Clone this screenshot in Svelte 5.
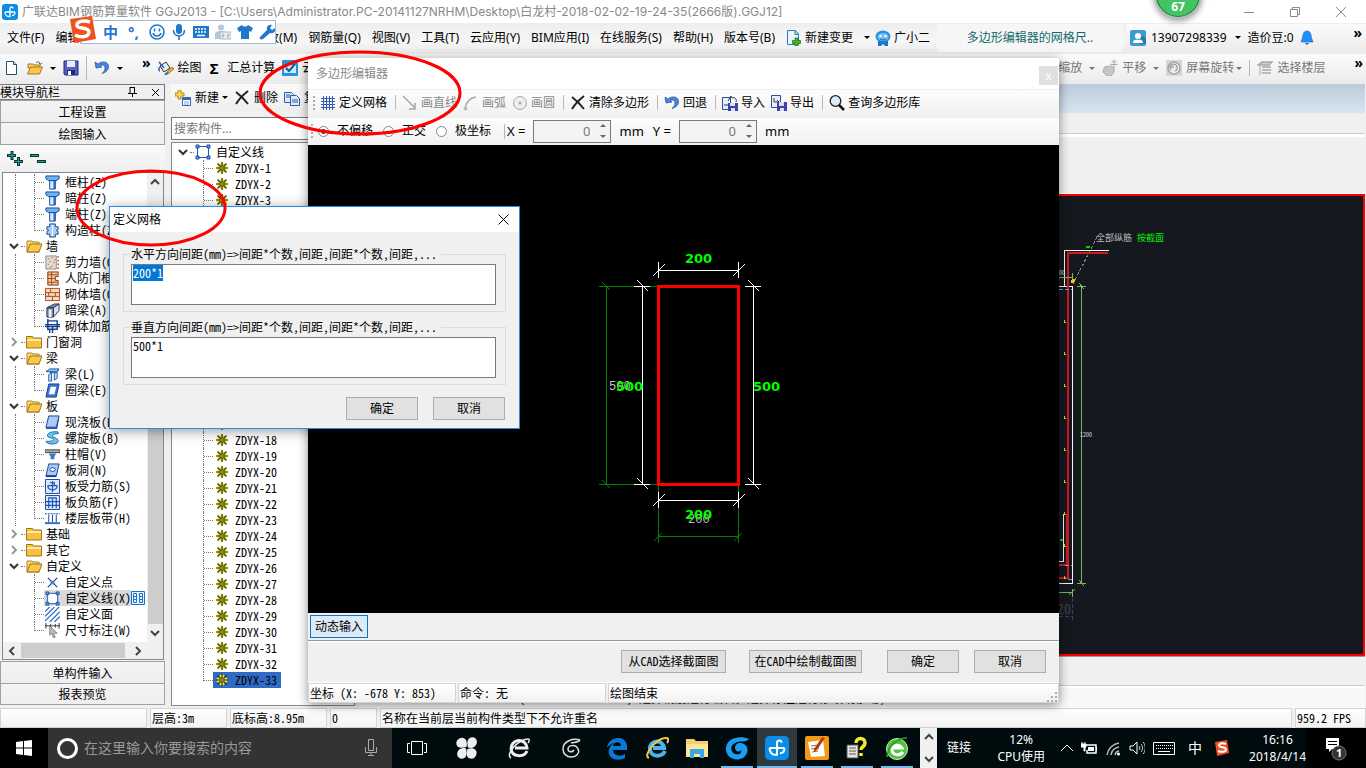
<script>
import { onMount } from 'svelte';

let gridInput;

const menus = ['文件(F)', '编辑(E)', '楼层(L)', '构件(N)', '绘图(D)', '修改(M)', '钢筋量(Q)', '视图(V)', '工具(T)', '云应用(Y)', 'BIM应用(I)', '在线服务(S)', '帮助(H)', '版本号(B)'];

const modules = [
    { label: '框柱(Z)', icon: 'column' },
    { label: '暗柱(Z)', icon: 'column' },
    { label: '端柱(Z)', icon: 'column' },
    { label: '构造柱(Z)', icon: 'cross', last: true },
    { label: '墙', folder: 'open' },
    { label: '剪力墙(Q)', icon: 'shear' },
    { label: '人防门框墙(RF)', icon: 'frame' },
    { label: '砌体墙(Q)', icon: 'brick' },
    { label: '暗梁(A)', icon: 'beamdark' },
    { label: '砌体加筋(Y)', icon: 'rebar', last: true },
    { label: '门窗洞', folder: 'closed' },
    { label: '梁', folder: 'open' },
    { label: '梁(L)', icon: 'beam' },
    { label: '圈梁(E)', icon: 'ring', last: true },
    { label: '板', folder: 'open' },
    { label: '现浇板(B)', icon: 'slab' },
    { label: '螺旋板(B)', icon: 'spiral' },
    { label: '柱帽(V)', icon: 'cap' },
    { label: '板洞(N)', icon: 'hole' },
    { label: '板受力筋(S)', icon: 'force' },
    { label: '板负筋(F)', icon: 'neg' },
    { label: '楼层板带(H)', icon: 'strip', last: true },
    { label: '基础', folder: 'closed' },
    { label: '其它', folder: 'closed' },
    { label: '自定义', folder: 'open' },
    { label: '自定义点', icon: 'point', tail: true },
    { label: '自定义线(X)', icon: 'line', tail: true, selected: true },
    { label: '自定义面', icon: 'hatch', tail: true },
    { label: '尺寸标注(W)', icon: 'dim', tail: true, last: true }
];

const parts = Array.from({ length: 33 }, (_, i) => `ZDYX-${i + 1}`);
const barTicks = Array.from({ length: 9 }, (_, i) => 125 + i * 32);

const pinned = [
    { icon: 'pinwheel' },
    { icon: 'ewhite' },
    { icon: 'gline' },
    { icon: 'edge' },
    { icon: 'ie' },
    { icon: 'explorer' },
    { icon: 'gblue', open: true },
    { icon: 'app', open: true, active: true },
    { icon: 'notes', open: true },
    { icon: 'help', open: true },
    { icon: 'egreen', open: true }
];

const icons = {
    app: '<rect width="16" height="16" rx="3" fill="#0a8ce8"/><path d="M8 8V4.500c0-2 3-2 3 0M3 8h10M3 8c0 3 2 4.500 3.500 4.500H8V8M13 8c0 2-1 3.500-3 3.500" fill="none" stroke="#fff" stroke-width="1.300"/>',
    doc: '<path d="M2.500 1.500h7l3 3v10h-10z" fill="#fff" stroke="#27486f"/><path d="M9.500 1.500v3h3" fill="#cde" stroke="#27486f"/>',
    open: '<path d="M1 4h5l1 1h6v3H1z" fill="#f7d269" stroke="#a37a1b"/><path d="M0.500 14l3-7h12l-3 7z" fill="#ffc64a" stroke="#a37a1b"/><path d="M9 3c2-2 4-1 4 1M12 3l1.500 1.500L15 3" fill="none" stroke="#48627e"/>',
    save: '<path d="M1 1h14v14H2l-1-1z" fill="#5560c8" stroke="#23277e"/><path d="M4 1h8v6H4z" fill="#e8ecff"/><path d="M4 10h8v5H4z" fill="#23277e"/><path d="M5 11h3v4H5z" fill="#fff"/>',
    undo: '<path d="M1 2l1 6 6-1-2-1.500c3-1.500 5 0 5 2.500 0 2-1 4-3 5.500 4-1 7-4 6.500-7.500C14 1.500 8 .5 4 4z" fill="#4a84dc" stroke="#1d4ea4" stroke-width=".7"/>',
    paint: '<path d="M2 6l6-4 4 6-6 4z" fill="#e6f0fa" stroke="#333"/><path d="M1 2l5 6M2 7c-2 2-1 4 0 4" stroke="#2761b5" fill="none" stroke-width="1.500"/><path d="M9 12l5-5 2 2-5 4-4 2z" fill="#f0b428" stroke="#6b4a10" stroke-width=".6"/><path d="M6 15l3-3 2 2z" fill="#2761b5"/>',
    cloud: '<rect width="16" height="16" rx="1" fill="#2196dc"/><path d="M2 5h12v8H2z" fill="#cdeaff"/><path d="M4 8l3 3 6-7" fill="none" stroke="#125a9e" stroke-width="2"/>',
    docadd: '<path d="M1.500.500h8l3 3v11h-11z" fill="#e8f4ff" stroke="#2a7fb8"/><path d="M9 .500v4h4" fill="#9fd0f4" stroke="#2a7fb8"/><path d="M9 8h3v2.500h2.500v3H12V16H9v-2.500H6.500v-3H9z" fill="#46b526" stroke="#1e6d0c" stroke-width=".7"/>',
    robot: '<ellipse cx="8" cy="6.500" rx="7.500" ry="6" fill="#2a92dc"/><path d="M3 11h10l0 5h-3l-2-2-2 2H3z" fill="#1b78c8"/><ellipse cx="8" cy="7" rx="5.500" ry="4" fill="#6cc0f0"/><circle cx="5.500" cy="6" r="1.200" fill="#fff"/><circle cx="10.500" cy="6" r="1.200" fill="#fff"/><path d="M5 8.500c2 2 4 2 6 0" stroke="#0c4c8c" fill="none"/>',
    user: '<rect width="16" height="16" rx="2" fill="#3c9bd0"/><path d="M9 14h7V9l-4-4z" fill="#2a78a8"/><circle cx="8" cy="6" r="3" fill="#fff"/><path d="M3 13c0-3 2-4 5-3 3-1 5 0 5 3z" fill="#fff"/>',
    bell: '<path d="M8 1c-4 0-4 4-4.500 7L2 12h12l-1.500-4C12 5 12 1 8 1z" fill="#1e90ff" stroke="#1561b0" stroke-width=".6"/><path d="M6 13h4l-2 2z" fill="#1561b0"/>',
    hand: '<path d="M2 8c1-2 3-2 4-1 1-2 4-1 6 1v4l-3 4H5L1 12z" fill="#c6c6c6" stroke="#aaa"/><path d="M12 0v8M9.500 2.500L12 .500l2.500 2M8.500 4.500h7" stroke="#aaa" fill="none"/>',
    rotate: '<rect width="16" height="16" fill="#d6d6d6"/><circle cx="8" cy="8" r="6" fill="#eee" stroke="#a5a5a5" stroke-width="1.500"/><path d="M5 10a3.500 3.500 0 1 1 4 1M4 3v4h4" fill="none" stroke="#a5a5a5" stroke-width="1.500"/>',
    floors: '<path d="M1 5l4-3h10l-3 3zM5 7h9M5 10h9M5 13h9" fill="#ccc" stroke="#a8a8a8" stroke-width="1.500"/><path d="M3 5v10" stroke="#a8a8a8"/>',
    newpart: '<path d="M7.500 7.500h8v8h-8z" fill="#fff" stroke="#3568b8"/><path d="M7.500 8h8v2h-8z" fill="#3568b8"/><path d="M9 12h5M9 14h5" stroke="#8ab"/><path d="M4 0h2v3h3v3H6v3H3V6H0V3h3V0z" fill="#ffd84a" stroke="#9b7410" stroke-width=".8"/>',
    del: '<path d="M2 2c4 3 8 7 12 12M14 1C9 5 5 9 2 14" stroke="#222" stroke-width="2" fill="none"/>',
    copy: '<path d="M.5 2.500h7l2 2v8h-9z" fill="#dfeafc" stroke="#2b5db0"/><path d="M6.500 5.500h6l3 3v7h-9z" fill="#dfeafc" stroke="#2b5db0"/><path d="M8 10h6M8 12h6M2 5h4M2 7h4" stroke="#2b5db0"/>',
    grid: '<path d="M3.500 1v14M6.500 1v14M9.500 1v14M12.500 1v14M1 3.500h14M1 6.500h14M1 9.500h14M1 12.500h14" stroke="#2c5cb4"/>',
    drawline: '<path d="M1 1l12 12M13 8v6H7" fill="none" stroke="#a8a8a8" stroke-width="1.500"/>',
    arc: '<path d="M2 14C3 7 6 3 13 2" fill="none" stroke="#a8a8a8" stroke-width="1.500"/><circle cx="2.500" cy="13.500" r="2" fill="#bbb"/>',
    circle: '<circle cx="8" cy="8" r="6.500" fill="#eee" stroke="#a8a8a8"/><circle cx="8" cy="8" r="1.500" fill="#a8a8a8"/>',
    imp: '<path d="M.5 2.500h8v12h-8z" fill="#e8effa" stroke="#2b4f90"/><path d="M2 10h4M6 6l3-5 1 2c3-1 5 1 4 4" stroke="#335" fill="none"/><path d="M6 8h10v8H6z" fill="#3c44a8"/><path d="M8 8h5v3H8zM9 13h4v3H9z" fill="#dde"/>',
    exp: '<path d="M.5.500h9v12h-9z" fill="#e8effa" stroke="#2b4f90"/><path d="M3 3v4h5M6 5l2 2-2 2" stroke="#335" fill="none"/><path d="M6 7h10v9H6z" fill="#3c44a8"/><path d="M8 7h5v4H8zM9 13h4v3H9z" fill="#dde"/>',
    find: '<circle cx="6.500" cy="6" r="5.300" fill="#dcecfa" stroke="#222" stroke-width="1.300"/><path d="M10 10l5 5" stroke="#111" stroke-width="2.500"/>',
    folderopen: '<path d="M1 3h5l1 1h6v10H1z" fill="#f8d878" stroke="#b08820"/><path d="M1 14l3-8h12l-3 8z" fill="#fcc84c" stroke="#9c7410"/>',
    folderclosed: '<path d="M.5 3.500v-1h6l1 1.500h8v10H.5z" fill="#f6c143" stroke="#a17a14"/><path d="M1 5h14v2H1z" fill="#fdeaa8"/>',
    column: '<path d="M1 1h14v3l-3 2H4L1 4z" fill="#6fb4ee" stroke="#123f92"/><path d="M5 6h6v9H5z" fill="#d8ecff" stroke="#123f92"/><path d="M9 6h2v9H9z" fill="#2b6cd0"/>',
    cross: '<path d="M5 1h6v3h3v3l-2 1 2 1v3h-3v3H5v-3H2V9l2-1-2-1V4h3z" fill="#a9cdf4" stroke="#173f8a"/><path d="M8 2v12" stroke="#fff"/>',
    shear: '<path d="M1 1h11v14H1z" fill="#e4ded8" stroke="#888"/><path d="M3 4h1M7 3h1M5 7h1M9 8h1M3 10h1M7 12h1M10 5h1M5 13h1M14 1v14" stroke="#c4571c" stroke-width="1.500" stroke-dasharray="2 2"/>',
    frame: '<path d="M3 1h11v5h-3v4h3v5H3z" fill="#f0c8a0" stroke="#7c2c08"/><path d="M3 4h10M3 8h7M3 12h10M7 1v14" stroke="#a84414"/>',
    brick: '<path d="M.5 1.500h15v13H.5z" fill="#f8d8bc" stroke="#a44a1c"/><path d="M0 6h16M0 10h16M6 2v4M11 6v4M4 6v4M8 10v5" stroke="#a44a1c"/>',
    beamdark: '<path d="M2 5l8-4h5l-6 4zM2 5h7v10H2z" fill="#7c94b4" stroke="#24354c"/><path d="M9 5l6-4v7l-6 7z" fill="#d4e2f2" stroke="#24354c"/><path d="M4 7h3v8H4z" fill="#e8f0fa"/>',
    rebar: '<path d="M3 2h10v9H3zM0 6h16M0 8h16M5 11v4M8 8v7M3 0v12" fill="none" stroke="#123f92" stroke-width="1.500"/>',
    beam: '<path d="M1 5l4-3h10l-3 3zM5 6h6l4-3" fill="#7cc4ee" stroke="#1c5ca8"/><path d="M4 8l3-2v9H4zM10 7l3-2v7l-3 2z" fill="#bfe4fa" stroke="#1c5ca8"/>',
    ring: '<path d="M4 1h11l-3 14H1z" fill="#3a76d0" stroke="#123f82"/><path d="M6 4h6l-2 8H4z" fill="#fff"/>',
    slab: '<path d="M4 1h11l-3 12H1z" fill="#a9cbf6" stroke="#123f92"/><path d="M1 13h11l3-12v3l-2 11H1z" fill="#1d55b8"/>',
    spiral: '<path d="M14 1C6 0 1 3 3 6c2 2 6 1 6 3s-4 2-8 2c1 4 14 4 13-1-1-3-6-3-6-5s3-2 6-2z" fill="#6cc4f0" stroke="#1c64ac"/>',
    cap: '<path d="M0 3h16v3H0z" fill="#aaa" stroke="#444"/><path d="M4 7h8l-2 3v3H6v-3z" fill="#3a76d0"/>',
    hole: '<path d="M4 1h11l-3 13H1z" fill="#a9cbf6" stroke="#123f92"/><ellipse cx="8" cy="7" rx="3" ry="2" fill="#fff" stroke="#123f92"/><path d="M1 14h11" stroke="#123f92" stroke-width="2"/>',
    force: '<path d="M.5.500h15v15H.5z" fill="#dce9fa" stroke="#123f92"/><path d="M8 2v12M3 7c0 6 10 6 10 0M3 7h10M5 4h5v3" stroke="#1d55b8" fill="none" stroke-width="1.300"/>',
    neg: '<path d="M.5.500h15v15H.5z" fill="#dce9fa" stroke="#123f92"/><path d="M4 14V3h8v11M1 7h14M1 11h14M8 3v11" stroke="#1d55b8" fill="none" stroke-width="1.300"/>',
    strip: '<path d="M0 3h16M0 13h16" stroke="#123f92" stroke-dasharray="2 1"/><path d="M0 12h16v2H0z" fill="#2b6cd0"/><path d="M4 4v8M8 4v8M12 4v8" stroke="#123f92"/>',
    point: '<path d="M3 3l10 10M13 3L3 13" stroke="#1b3f80" stroke-width="1.200"/><circle cx="8" cy="8" r="2.200" fill="#3b86e0"/>',
    line: '<path d="M2.500 2.500h11v11h-11z" fill="#fff" stroke="#1d55b8"/><path d="M1 1h3v3H1zM12 1h3v3h-3zM1 12h3v3H1zM12 12h3v3h-3z" fill="#6a9cf0" stroke="#1850b0"/>',
    hatch: '<path d="M0 5l5-5M0 10L10 0M0 15L15 0M5 16L16 5M10 16l6-6" stroke="#1d62c8" stroke-width="1.200"/>',
    dim: '<path d="M0 3h16M1 0v6M15 0v6M6 1v4M11 1v4" stroke="#333"/><path d="M5 3l8 8-4 0 2 4-2 1-2-5-2 2z" fill="#bbb" stroke="#666" stroke-width=".7"/>',
    gear: '<path d="M5 1h6v2h2v2h2v6h-2v2h-2v2H5v-2H3v-2H1V5h2V3h2z" fill="#f5ec20"/><path d="M8 0v6M8 10v6M0 8h6M10 8h6M2 2l4 4M10 10l4 4M14 2l-4 4M6 10l-4 4" stroke="#222" stroke-width="1.500"/><circle cx="8" cy="8" r="2.800" fill="#f5ec20" stroke="#333" stroke-width="1.300"/><path d="M7 7h2v2H7z" fill="#333"/>',
    plus: '<path d="M5 0v9M0 4.500h9M11.500 6v9M7 10.500h9" stroke="#003838" stroke-width="3"/><path d="M5 1v7M1 4.500h7M11.500 7v7M8 10.500h7" stroke="#2ba08c"/>',
    minus: '<path d="M0 4.500h9M7 10.500h9" stroke="#003838" stroke-width="3"/><path d="M1 4.500h7M8 10.500h7" stroke="#2ba08c"/>',
    smile: '<circle cx="8" cy="8" r="7" fill="none" stroke="#1f78c8" stroke-width="1.600"/><path d="M5.500 4.500v3M10.500 4.500v3M4 9c1 4 7 4 8 0" fill="none" stroke="#1f78c8" stroke-width="1.500"/>',
    mic: '<rect x="5" y="0" width="6" height="10" rx="3" fill="#1f78c8"/><path d="M2.500 6c0 8 11 8 11 0M8 12v4" fill="none" stroke="#1f78c8" stroke-width="1.600"/>',
    kb: '<rect y="2" width="16" height="12" fill="#1f78c8"/><path d="M2 5h12M2 8h12" stroke="#fff" stroke-width="1.500" stroke-dasharray="2 1"/><path d="M4 11.500h8" stroke="#fff" stroke-width="1.500"/>',
    person: '<circle cx="6" cy="3.500" r="3" fill="#bcc6d0"/><path d="M0 15V9c3-3 9-3 11 0v6z" fill="#bcc6d0"/><path d="M5 8h11v7H5z" fill="#eef2f6" stroke="#aab4be"/><path d="M7 10h2v1.500H7V13h2M12 10h2v1.500h-2V13h2" fill="none" stroke="#aab4be"/>',
    shirt: '<path d="M0 4l5-3c1 2 5 2 6 0l5 3-2 4-2-1v8H4V7L2 8z" fill="#1f78c8"/>',
    wrench: '<path d="M1 13l7-7c-1-4 2-6 5-5l-2 3 2 2 3-2c1 4-2 6-5 5l-7 6c-2 1-4 0-3-2z" fill="#1f78c8"/>',
    sogou: '<path d="M1 3l22-3 4 23-22 4z" fill="#f0501c"/><path d="M21 6c-6-2-14-1-13 4 1 3 12 1 12 6 0 5-8 6-14 3" fill="none" stroke="#fff" stroke-width="3.500"/>',
    sogousmall: '<path d="M1 2l12-2 2 13-12 3z" fill="#f0501c"/><path d="M12 4c-3-1-7-1-7 1.500C5.500 8 12 6.500 12 9.500c0 2.500-5 3-8 1.500" fill="none" stroke="#fff" stroke-width="2"/>',
    pinwheel: '<g fill="#eee"><path d="M11.500 11C13 5 10 1 6 2 1 3 0 8 3 11c2 1 5 1 8.500 0z"/><path d="M13 11.500c-1-4-1-7 1-9C19-1 24 4 21 9c-2 3-5 3.500-8 2.500z"/><path d="M12.500 13c6-2 10 1 9 5-1 5-6 6-9 3-1-2-1-5 0-8z"/><path d="M11 12.500c1 4 1 7-1 9-5 3.500-10-1.500-7-6.500 2-3 5-3.500 8-2.500z"/></g>',
    ewhite: '<path d="M4 13a8 8 0 0 1 16-1H8M20 15c-3 7-15 6-16-2" fill="none" stroke="#eee" stroke-width="3"/><path d="M4 22c-6-3 6-18 17-19 2 0 1 3 0 4" fill="none" stroke="#eee" stroke-width="1.500"/>',
    gline: '<path d="M21 4c-7-2-17 1-17 9 0 5 4 8 8 8 6 0 9-5 7-8-2-5-10-4-10 0 0 3 4 4 6 1" fill="none" stroke="#ddd" stroke-width="1.500"/><path d="M21 4c-2 3-7 2-9 3" fill="none" stroke="#ddd" stroke-width="1.500"/>',
    edge: '<path d="M2 12C3 0 21-2 22 10v4H8c0 6 8 7 12 4v4c-10 5-20-2-15-11 2-3 4-4 6-4-5 0-8 3-9 5zM8 10h8c0-5-7-5-8 0z" fill="#0a78d8" fill-rule="evenodd"/>',
    ie: '<path d="M5 13a7 7 0 0 1 14-1H8M20 15c-3 7-15 6-15-2" fill="none" stroke="#4ab4ee" stroke-width="4"/><path d="M4 22C-3 20 12 1 22 2c2 1 1 4 0 5" fill="none" stroke="#f4c63c" stroke-width="2"/>',
    explorer: '<path d="M1 3h8l2 2h12v16H1z" fill="#f4ce6c"/><path d="M1 8h22v13H1z" fill="#ffe59a"/><path d="M5 13h14v9h-4v-4H9v4H5z" fill="#38a8e8"/>',
    gblue: '<path d="M24 3c-9-4-24-1-23 11 1 11 17 13 21 3 2-6-2-10-7-10-3 0-5 2-5 5s4 5 6 2c1 4-3 5-6 4-5-2-5-9 0-11 5-3 10 0 14-4z" fill="#1a9cf0"/>',
    notes: '<rect width="24" height="24" rx="2" fill="#f29a18"/><path d="M3 6l15-2 2 16-14 1z" fill="#fff"/><path d="M6 10l8-1M6 13l8-1M7 16l6-1" stroke="#a86c30"/><path d="M20 2l-8 12-3 2 0-3 8-12z" fill="#b33c14"/>',
    help: '<path d="M2 9h11v13H2z" fill="#e8e8e0" stroke="#555"/><path d="M4 12h7M4 15h7M4 18h7" stroke="#555"/><path d="M11 7c0-6 9-6 9 0 0 4-4 3-4 7M16 17v3" fill="none" stroke="#f5e92c" stroke-width="3.500"/>',
    egreen: '<circle cx="12" cy="13" r="10.500" fill="#4fc43c" stroke="#c8f0c0"/><path d="M7 13a5.500 5.500 0 0 1 10-1H8M18 16c-3 4-11 4-11-3" fill="none" stroke="#fff" stroke-width="3"/><path d="M2 21C3 10 12 2 22 2" fill="none" stroke="#2c9c20" stroke-width="1.500"/>',
    battery: '<path d="M5 5h10v8H6v-3" fill="none" stroke="#fff" stroke-width="1.500"/><path d="M7 7h6v4H7zM15 7h1v4h-1z" fill="#fff"/><path d="M0 4h5v3H4v4H3V7H0zM1 2v2M4 2v2" fill="#fff" stroke="#fff"/>',
    wifi: '<path d="M2 15A14 14 0 0 1 14 3M6 15a9 9 0 0 1 8-8M10 15a5 5 0 0 1 4-4" fill="none" stroke="#bbb" stroke-width="1.500"/><circle cx="13.500" cy="14" r="1.500" fill="#fff"/>',
    volume: '<path d="M1 6h3l4-4v12l-4-4H1z" fill="none" stroke="#fff"/><path d="M10 6c1 1 1 3 0 4M12 4c2 2 2 6 0 8M14 2c3 3 3 9 0 12" fill="none" stroke="#ccc"/>'
};

onMount(() => {
    gridInput.focus();
    gridInput.select();
});
</script>

{#snippet icon(name, size = 16, box = 16)}
    <svg class="icon" width={size} height={size} viewBox="0 0 {box} {box}" aria-hidden="true">{@html icons[name]}</svg>
{/snippet}

{#snippet chevron(dir)}
    <svg class="icon" width="10" height="10" viewBox="0 0 10 10" aria-hidden="true">
        <path d={{ up: 'M1 7l4-4 4 4', down: 'M1 3l4 4 4-4', left: 'M7 1L3 5l4 4', right: 'M3 1l4 4-4 4' }[dir]} fill="none" stroke="currentColor" stroke-width="2" />
    </svg>
{/snippet}

<div class="desktop">
    <div class="app">
        <header class="titlebar">
            {@render icon('app')}
            <h1>广联达BIM钢筋算量软件 GGJ2013 - [C:\Users\Administrator.PC-20141127NRHM\Desktop\白龙村-2018-02-02-19-24-35(2666版).GGJ12]</h1>
            <div class="winctl">
                <button aria-label="最小化"><svg width="10" height="10"><path d="M0 5.500h10" stroke="#888" /></svg></button>
                <button aria-label="还原"><svg width="10" height="10"><path d="M.5 2.500h7v7h-7zM2.500 2.500v-2h7v7h-2" fill="none" stroke="#888" /></svg></button>
                <button aria-label="关闭"><svg width="10" height="10"><path d="M0 0l10 10M10 0L0 10" stroke="#888" /></svg></button>
            </div>
        </header>

        <nav class="menubar">
            {#each menus as item}
                <button>{item}</button>
            {/each}
            <button class="withicon">{@render icon('docadd')}新建变更<i class="caret"></i></button>
            <button class="withicon helper">{@render icon('robot')}广小二</button>
            <a class="tip" href="#tip">多边形编辑器的网格尺..</a>
            <div class="account">
                {@render icon('user')}
                <button>13907298339<i class="caret"></i></button>
                <span>造价豆:0</span>
                {@render icon('bell')}
                <b class="more">»</b>
            </div>
        </nav>

        <div class="toolbar">
            <button aria-label="新建">{@render icon('doc')}</button>
            <button aria-label="打开">{@render icon('open')}<i class="caret"></i></button>
            <button aria-label="保存">{@render icon('save')}</button>
            <i class="sep"></i>
            <button aria-label="撤销">{@render icon('undo')}<i class="caret"></i></button>
            <b class="more">»</b>
            <button class="draw">{@render icon('paint')}绘图</button>
            <button><b class="sigma">Σ</b>汇总计算</button>
            <button>{@render icon('cloud')}云检查</button>
            <div class="viewtools">
                <button>缩放<i class="caret"></i></button>
                <button>{@render icon('hand')}平移<i class="caret"></i></button>
                <button>{@render icon('rotate')}屏幕旋转<i class="caret near"></i></button>
                <i class="sep"></i>
                <button>{@render icon('floors')}选择楼层</button>
                <b class="more">»</b>
            </div>
        </div>

        <div class="workspace">
            <aside class="sidebar">
                <div class="panelhead">
                    <span>模块导航栏</span>
                    <svg width="9" height="10"><path d="M2 0v6M6.500 0v6M2 .500h5M0 6.500h9M4.500 7v3" fill="none" stroke="#000" /></svg>
                    <svg width="9" height="9"><path d="M1 1l7 7M8 1L1 8" stroke="#000" /></svg>
                </div>
                <button class="section">工程设置</button>
                <button class="section">绘图输入</button>
                <div class="expand">{@render icon('plus')}{@render icon('minus')}</div>
                <div class="treebox">
                    <div class="treemain">
                        <ul class="tree">
                            {#each modules as node}
                                {#if node.folder}
                                    <li class="branch" class:shut={node.folder === 'closed'}>
                                        {@render chevron(node.folder === 'open' ? 'down' : 'right')}
                                        <i class="stub"></i>
                                        {@render icon('folder' + node.folder)}
                                        <span>{node.label}</span>
                                    </li>
                                {:else}
                                    <li class="leaf">
                                        <i class="guide" class:blank={node.tail}></i>
                                        <i class="elbow" class:last={node.last}></i>
                                        <span class="node" class:selected={node.selected}>{@render icon(node.icon)}<span>{node.label}</span></span>
                                        {#if node.selected}
                                            <svg class="icon" width="14" height="14"><path d="M.5.500h13v13H.5zM2.500 2.500h3v9h-3zM8.500 2.500h3v9h-3zM3 5.500h3M3 8.500h3M9 5.500h3M9 8.500h3" fill="#e4f1ff" stroke="#1d72d0" /></svg>
                                        {/if}
                                    </li>
                                {/if}
                            {/each}
                        </ul>
                        <div class="vscroll">
                            {@render chevron('up')}
                            <i class="thumb"></i>
                            {@render chevron('down')}
                        </div>
                    </div>
                    <div class="hscroll">
                        {@render chevron('left')}
                        <i class="thumb"></i>
                        {@render chevron('right')}
                    </div>
                </div>
                <button class="section">单构件输入</button>
                <button class="section">报表预览</button>
            </aside>

            <section class="parts">
                <div class="parttools">
                    <button>{@render icon('newpart')}新建<i class="caret near"></i></button>
                    <button>{@render icon('del')}删除</button>
                    <button>{@render icon('copy')}复制</button>
                </div>
                <input class="search" type="text" placeholder="搜索构件..." aria-label="搜索构件" />
                <ul class="parttree">
                    <li class="root">{@render chevron('down')}<i class="stub"></i>{@render icon('line')}<span>自定义线</span></li>
                    {#each parts as part, i}
                        <li class="leaf">
                            <i class="elbow" class:last={i === parts.length - 1}></i>
                            <span class="part" class:selected={i === parts.length - 1}>{@render icon('gear', 12)}<span>{part}</span></span>
                        </li>
                    {/each}
                </ul>
            </section>

            <section class="model">
                <div class="tabs"></div>
                <div class="ribbon"></div>
                <div class="ribbon tall"></div>
                <div class="cad">
                    <svg width="304" height="458" viewBox="0 0 304 458" shape-rendering="crispEdges">
                        <path d="M38 41L14 88" stroke="#888" stroke-dasharray="3 2" fill="none" />
                        <path d="M5.500 90V54.500H50M0 90.500h13.500V387H0M0 365.500h4.500V318" stroke="#f4f4ec" fill="none" />
                        <path d="M49 57H9v325H0M8 318v51H0" stroke="#cd1a1e" stroke-width="2" fill="none" />
                        <path d="M22.500 90v297M18 90.500h9M18 387.500h9M20 87l5 6M20 384l5 6M0 396.500h13.500M13.500 393v8M10 399l6-6M0 81.500h13.500M13.500 77v8" stroke="#76b85c" fill="none" />
                        <path d="M13.500 402v22M0 420.500h14" stroke="#3a434f" stroke-dasharray="4 2" fill="none" />
                        <path d="M0 93.500h13M6 369.500h7M9 383.500h5" stroke="#7c9ccc" stroke-dasharray="4 2" />
                        <path d="M27 50.500h4M1 343.500h3" stroke="#00d000" stroke-width="2" />
                        <circle cx="14" cy="85" r="2" fill="#e8c820" />
                        {#each barTicks as y}
                            <path d="M5.500 {y - 1}v2h1" fill="none" stroke="#e8c820" />
                        {/each}
                        <text x="37" y="45" class="note">全部纵筋</text>
                        <text x="78" y="45" class="note green">按截面</text>
                        <text x="21" y="241" class="tiny">1200</text>
                        <text x="0" y="79" class="tiny">00</text>
                        <text x="-2" y="418" class="dimmed">20</text>
                    </svg>
                </div>
                <div class="under"></div>
                <div class="viewstatus">
                    <span>(X: -11454 Y: -421)</span>
                    <span>选择钢筋进行编辑，选择标注进行修改或移动;</span>
                </div>
            </section>
        </div>

        <footer class="statusbar">
            <span class="blankcell"></span>
            <span class="floor">层高:3m</span>
            <span class="base">底标高:8.95m</span>
            <span class="zero">0</span>
            <span class="msg">名称在当前层当前构件类型下不允许重名</span>
            <span class="fps">959.2 FPS</span>
        </footer>
    </div>

    <section class="editor">
        <header>
            <h2>多边形编辑器</h2>
            <button aria-label="关闭">x</button>
        </header>
        <div class="edtools">
            <i class="grip"></i>
            <button>{@render icon('grid')}定义网格</button>
            <i class="sep"></i>
            <button disabled>{@render icon('drawline')}画直线</button>
            <button disabled>{@render icon('arc')}画弧</button>
            <button disabled>{@render icon('circle')}画圆</button>
            <i class="sep"></i>
            <button>{@render icon('del')}清除多边形</button>
            <i class="sep"></i>
            <button>{@render icon('undo')}回退</button>
            <i class="sep"></i>
            <button>{@render icon('imp')}导入</button>
            <button>{@render icon('exp')}导出</button>
            <i class="sep"></i>
            <button>{@render icon('find')}查询多边形库</button>
        </div>
        <div class="edtools coords">
            <i class="grip"></i>
            <label><input type="radio" name="offset" checked />不偏移</label>
            <label><input type="radio" name="offset" />正交</label>
            <label><input type="radio" name="offset" />极坐标</label>
            <i class="sep"></i>
            {#each ['X', 'Y'] as axis}
                <label class="axis">
                    {axis} =
                    <span class="spin">
                        <input type="text" value="0" />
                        <span><i class="up"></i><i class="down"></i></span>
                    </span>
                    mm
                </label>
            {/each}
        </div>
        <div class="sketch">
            <svg width="751" height="467" viewBox="0 0 751 467" shape-rendering="crispEdges" fill="none">
                <path d="M298.500 141v199M291 141.500h59M291 339.500h59M350.500 341v57M430.500 341v57M350 391.500h81M294 137l8 8M294 335l8 8M346 396l8-8M426 396l8-8" stroke="#008000" />
                <text x="301" y="245" class="plain">500</text>
                <text x="380" y="378" class="plain">200</text>
                <path d="M350 125.500h81M350.500 117v16M430.500 117v16M345 131l12-12M425 131l12-12" stroke="#fff" />
                <path d="M350 355.500h81M350.500 347v16M430.500 347v16M345 361l12-12M425 361l12-12" stroke="#fff" />
                <path d="M334.500 141v199M326 141.500h16M326 339.500h16M329 135l11 11M329 333l11 11" stroke="#fff" />
                <path d="M445.500 141v199M437 141.500h16M437 339.500h16M440 135l11 11M440 333l11 11" stroke="#fff" />
                <rect x="350.500" y="141.500" width="80" height="198" stroke="#f00" stroke-width="3" />
                <text x="377" y="118" class="strong">200</text>
                <text x="377" y="374" class="strong">200</text>
                <text x="308" y="246" class="strong">500</text>
                <text x="445" y="246" class="strong">500</text>
            </svg>
        </div>
        <div class="dynamic"><button>动态输入</button></div>
        <div class="actions">
            <button class="cadpick">从CAD选择截面图</button>
            <button class="caddraw">在CAD中绘制截面图</button>
            <button>确定</button>
            <button>取消</button>
        </div>
        <footer>
            <span>坐标 (X: -678 Y: 853)</span>
            <span>命令: 无</span>
            <span>绘图结束</span>
        </footer>
    </section>

    <div class="dialog" role="dialog" aria-label="定义网格">
        <header>
            <h2>定义网格</h2>
            <button aria-label="关闭"><svg width="11" height="11"><path d="M.5.500l10 10M10.500.500l-10 10" stroke="#000" /></svg></button>
        </header>
        <fieldset>
            <legend>水平方向间距(mm)=&gt;间距*个数,间距,间距*个数,间距,...</legend>
            <textarea bind:this={gridInput} aria-label="水平方向间距">200*1</textarea>
        </fieldset>
        <fieldset>
            <legend>垂直方向间距(mm)=&gt;间距*个数,间距,间距*个数,间距,...</legend>
            <textarea aria-label="垂直方向间距">500*1</textarea>
        </fieldset>
        <div class="dlgbtns">
            <button>确定</button>
            <button>取消</button>
        </div>
    </div>

    <div class="ime">
        {@render icon('sogou', 28, 28)}
        <b>中</b>
        <b class="punct">°,</b>
        {@render icon('smile')}
        {@render icon('mic')}
        {@render icon('kb')}
        {@render icon('person')}
        {@render icon('shirt')}
        {@render icon('wrench')}
    </div>

    <div class="ball">67</div>

    <svg class="marks" width="480" height="260" aria-hidden="true">
        <ellipse cx="360" cy="93" rx="100" ry="41" />
        <ellipse cx="151" cy="208" rx="74" ry="37" />
    </svg>

    <footer class="taskbar">
        <button class="start" aria-label="开始">
            <svg width="16" height="16"><path d="M0 2l7-1v6.500H0zM8 1l8-1v7.500H8zM0 8.500h7V15l-7-1zM8 8.500h8V16l-8-1z" fill="#fff" /></svg>
        </button>
        <label class="cortana">
            <i class="ring"></i>
            <input type="text" placeholder="在这里输入你要搜索的内容" aria-label="搜索" />
            <svg width="12" height="18"><path d="M3.500.500h5v11h-5zM.5 8v5.500h11V8M6 14v3M3 16.500h6" fill="none" stroke="#aaa" /></svg>
        </label>
        <button class="task view" aria-label="任务视图">
            <svg width="20" height="16"><path d="M4.500 1.500h11v13h-11zM3 3.500H.5v9H3M17 3.500h2.500v9H17" fill="none" stroke="#fff" /></svg>
        </button>
        {#each pinned as task, i}
            <button class="task" class:first={i < 3} class:open={task.open} class:active={task.active} aria-label={task.icon}>
                {@render icon(task.icon, 24, task.icon === 'app' ? 16 : 24)}
            </button>
        {/each}
        <div class="taskscroll">{@render chevron('up')}{@render chevron('down')}</div>
        <span class="links">链接</span>
        <span class="cpu">12%<br />CPU使用</span>
        <div class="tray">
            <svg width="12" height="8"><path d="M0 7l6-6 6 6" fill="none" stroke="#fff" stroke-width="1" /></svg>
            {@render icon('battery')}
            {@render icon('wifi')}
            {@render icon('volume')}
            <svg width="22" height="13"><path d="M.5.500h21v12H.5z" fill="none" stroke="#fff" /><path d="M3 3.500h17M3 6.500h17" stroke="#fff" stroke-dasharray="1 1" /><path d="M5 9.500h12" stroke="#fff" /></svg>
            <span class="lang">中</span>
            {@render icon('sogousmall')}
        </div>
        <time>16:16<br />2018/4/14</time>
        <button class="notice" aria-label="通知">
            <svg width="24" height="28">
                <path d="M2 4h13v11H8l-3 3v-3H2z" fill="#fff" />
                <path d="M4 7.500h9M4 10.500h9" stroke="#000" />
                <circle cx="15" cy="19" r="7" fill="#333" stroke="#777" />
                <text x="12" y="23">1</text>
            </svg>
        </button>
    </footer>
</div>

<style>
    :global(body) {
        margin: 0;
        overflow: hidden;
    }
    .desktop {
        --ui: "Noto Sans", "Noto Sans CJK SC", sans-serif;
        --song: "Noto Sans Mono CJK SC", "Noto Sans CJK SC", monospace;
        position: relative;
        display: flex;
        flex-direction: column;
        min-height: 100vh;
        overflow: hidden;
        background: #f0f0f0;
        color: #000;
        font: 12px/16px var(--ui);
        white-space: nowrap;
    }
    .desktop * {
        box-sizing: border-box;
    }
    h1, h2, ul, fieldset {
        margin: 0;
        padding: 0;
        font-size: 12px;
        font-weight: normal;
    }
    ul {
        list-style: none;
    }
    button {
        display: flex;
        align-items: center;
        justify-content: center;
        margin: 0;
        padding: 0;
        border: 0;
        background: none;
        color: inherit;
        font: inherit;
    }
    .icon, svg {
        display: block;
        flex: none;
    }
    .caret {
        margin-left: 8px;
        border: 3px solid transparent;
        border-top-color: currentColor;
        border-bottom: 0;
    }
    .sep {
        width: 1px;
        height: 15px;
        background: #b8b8b8;
    }
    .more {
        font-size: 14px;
        line-height: 12px;
    }

    .app {
        display: flex;
        flex: 1;
        flex-direction: column;
    }
    .titlebar {
        display: flex;
        align-items: center;
        height: 23px;
        padding: 0 2px;
        background: #fff;
        color: #888;
    }
    .titlebar h1 {
        flex: 1;
        margin-left: 4px;
        font-family: Inter, "Noto Sans CJK SC", sans-serif;
    }
    .winctl {
        display: flex;
    }
    .winctl button {
        width: 46px;
        height: 20px;
    }
    .menubar {
        display: flex;
        align-items: center;
        gap: 11px;
        height: 31px;
        padding: 0 0 2px 7px;
        background: linear-gradient(#eee, #f6f6f6 60%, #e9e9e9);
    }
    .withicon {
        gap: 3px;
    }
    .helper {
        margin-left: -6px;
    }
    .tip {
        flex: 1;
        align-self: stretch;
        margin: 1px -8px 0 -4px;
        border-radius: 3px;
        background: #f6f6f6;
        color: #0f6a6a;
        line-height: 27px;
        text-align: center;
        text-decoration: none;
    }
    .account {
        display: flex;
        align-items: center;
        gap: 5px;
        width: 240px;
        height: 27px;
        padding: 0 4px;
        background: linear-gradient(#fbfbfb, #ececec);
    }
    .account button {
        margin-right: 2px;
    }
    .account .more {
        margin: -10px 0 0 auto;
    }
    .toolbar {
        display: flex;
        align-items: center;
        gap: 7px;
        height: 30px;
        padding: 0 0 2px 4px;
        background: linear-gradient(#fbfbfb, #ebebeb);
    }
    .toolbar button {
        gap: 4px;
    }
    .toolbar .caret {
        margin-left: 3px;
    }
    .toolbar .sep {
        height: 24px;
    }
    .toolbar .more {
        margin: -10px 0 0 12px;
    }
    .toolbar .sigma {
        margin: 0 5px 0 1px;
        font-size: 15px;
    }
    .viewtools {
        display: flex;
        align-items: center;
        gap: 7px;
        margin-left: auto;
        padding-right: 3px;
        color: #777;
    }
    .toolbar .viewtools .sep {
        height: 16px;
    }
    .toolbar .viewtools .near {
        margin-left: -2px;
    }
    .parttools .near {
        margin-left: -1px;
    }
    .toolbar .viewtools .more {
        margin-left: 22px;
        color: #000;
    }

    .workspace {
        display: flex;
        flex: 1;
    }
    .sidebar {
        display: flex;
        flex-direction: column;
        width: 165px;
        padding-bottom: 3px;
        font-family: var(--song);
    }
    .panelhead {
        display: flex;
        align-items: center;
        gap: 14px;
        height: 16px;
        padding-right: 4px;
        border: 1px solid #777;
        border-left: 0;
    }
    .panelhead span {
        flex: 1;
    }
    .section {
        height: 22px;
        border: 1px solid #a0a0a0;
        border-width: 1px 1px 0;
        background: linear-gradient(#f4f4f4, #eee);
    }
    .section:last-child {
        border-bottom-width: 1px;
    }
    .expand {
        display: flex;
        align-items: center;
        gap: 7px;
        height: 28px;
        padding-left: 7px;
        border-top: 1px solid #a0a0a0;
        background: linear-gradient(#fafafa, #eee);
    }
    .treebox {
        display: flex;
        flex: 1;
        flex-direction: column;
        margin: 0 1px 1px 2px;
        border: 1px solid #828790;
        background: #fff;
    }
    .treemain {
        display: flex;
        flex: 1;
    }
    .tree {
        flex: 1;
        min-width: 0;
        padding-top: 1px;
        overflow: hidden;
    }
    .tree li, .parttree li {
        display: flex;
        align-items: center;
        height: 16px;
    }
    .branch {
        padding-left: 6px;
        color: #333;
    }
    .branch.shut {
        color: #999;
    }
    .branch span {
        margin-left: 4px;
        color: #000;
    }
    .stub {
        width: 4px;
        margin: 0 1px 0 2px;
        border-top: 1px dotted #777;
    }
    .guide {
        flex: none;
        width: 19px;
        height: 16px;
        margin-left: 12px;
        border-left: 1px dotted #777;
    }
    .guide.blank {
        border-color: transparent;
    }
    .elbow {
        flex: none;
        align-self: stretch;
        width: 10px;
        border-left: 1px dotted #777;
        background: linear-gradient(90deg, #777 1px, transparent 1px) 0 8px / 2px 1px repeat-x;
    }
    .elbow.last {
        height: 9px;
    }
    .node {
        display: flex;
        flex: none;
        align-items: center;
        gap: 5px;
        height: 16px;
        padding-left: 1px;
    }
    .node.selected {
        background: #d9d9d9;
    }
    .node .icon {
        width: 15px;
        height: 15px;
    }
    .vscroll {
        display: flex;
        flex-direction: column;
        align-items: center;
        gap: 4px;
        width: 16px;
        padding: 4px 0;
        background: #f0f0f0;
        color: #444;
    }
    .vscroll .thumb {
        flex: 1;
        width: 15px;
        margin-top: 210px;
        background: #cdcdcd;
    }
    .hscroll {
        display: flex;
        align-items: center;
        gap: 4px;
        height: 17px;
        padding: 0 20px 0 4px;
        background: #f0f0f0;
        color: #444;
    }
    .hscroll .thumb {
        flex: 1;
        height: 15px;
        margin-right: 4px;
        background: #cdcdcd;
    }

    .parts {
        display: flex;
        flex-direction: column;
        width: 184px;
        margin: 0 4px 2px 6px;
    }
    .parttools {
        display: flex;
        align-items: center;
        gap: 6px;
        height: 27px;
        padding-left: 4px;
        background: linear-gradient(#fafafa, #eee);
    }
    .parttools button {
        gap: 4px;
    }
    .search {
        height: 23px;
        margin: 6px 0 2px;
        padding: 0 2px;
        border: 1px solid #7a7a7a;
        font: 12px/16px var(--ui);
    }
    .search::placeholder {
        color: #777;
    }
    .parttree {
        flex: 1;
        padding: 1px 0 0;
        border: 1px solid #828790;
        background: #fff;
        font-family: var(--song);
    }
    .root {
        padding-left: 6px;
        color: #333;
    }
    .root span {
        margin-left: 5px;
        color: #000;
    }
    .parttree .elbow {
        margin-left: 31px;
    }
    .part {
        display: flex;
        align-items: center;
        gap: 7px;
        height: 16px;
        padding: 0 4px 0 3px;
    }
    .part.selected {
        background: #316ac5;
    }

    .model {
        display: flex;
        flex: 1;
        flex-direction: column;
        min-width: 0;
        margin-right: 1px;
    }
    .tabs {
        height: 29px;
        background: linear-gradient(#bccad9, #d8e5f3);
    }
    .ribbon {
        height: 24px;
        border-bottom: 3px solid #fff;
        box-shadow: inset 0 -1px #ccc;
    }
    .ribbon.tall {
        height: 57px;
        border-bottom-width: 1px;
        box-shadow: none;
    }
    .cad {
        display: flex;
        flex: 1;
        justify-content: flex-end;
        border: 2px solid #f00;
        background: #15191f;
    }
    .note {
        fill: #bbb;
        font: 9px var(--song);
    }
    .note.green {
        fill: #00f000;
    }
    .tiny {
        fill: #ddd;
        font: 6px var(--song);
    }
    .dimmed {
        fill: #3a434f;
        font: 14px var(--song);
    }
    .under {
        height: 30px;
        border-top: 1px solid #999;
        border-bottom: 1px solid #ccc;
    }
    .viewstatus {
        display: flex;
        gap: 6px;
        height: 22px;
        padding-left: 160px;
        border-top: 2px solid #fff;
        background: #f8f8f8;
        font: 12px/20px var(--song);
    }

    .statusbar {
        display: flex;
        gap: 3px;
        height: 20px;
        font: 12px/17px var(--song);
    }
    .statusbar span, .editor footer span {
        padding: 0 1px;
        border: 1px solid #d4d4d4;
        background: linear-gradient(#fff, #f2f2f2);
    }
    .blankcell {
        width: 147px;
    }
    .floor {
        width: 77px;
    }
    .base {
        width: 97px;
    }
    .zero {
        width: 47px;
    }
    .msg {
        flex: 1;
    }
    .fps {
        width: 71px;
    }

    .editor {
        position: absolute;
        top: 58px;
        left: 308px;
        display: flex;
        flex-direction: column;
        width: 751px;
        background: #f0f0f0;
        box-shadow: 0 2px 10px rgba(0, 0, 0, 0.45);
    }
    .editor header {
        display: flex;
        align-items: center;
        justify-content: space-between;
        height: 31px;
        padding: 0 1px 0 8px;
        background: #fff;
        color: #888;
    }
    .editor header button {
        width: 19px;
        height: 19px;
        margin-top: 4px;
        background: #e0e0e0;
        color: #fff;
    }
    .edtools {
        display: flex;
        align-items: center;
        gap: 6px;
        height: 28px;
        padding: 0 0 2px 5px;
        border-top: 1px solid #eee;
        background: linear-gradient(#fdfdfd, #f1f1f1);
    }
    .edtools button {
        gap: 3px;
    }
    .edtools button:disabled {
        color: #888;
    }
    .edtools .sep {
        margin-left: 2px;
    }
    .grip {
        width: 2px;
        height: 14px;
        margin-right: -1px;
        background: repeating-linear-gradient(#aaa 0 2px, transparent 2px 4px);
    }
    .edtools label {
        display: flex;
        align-items: center;
        gap: 8px;
        margin-right: 4px;
    }
    .edtools input[type="radio"] {
        appearance: none;
        width: 11px;
        height: 11px;
        margin: 0;
        border: 1px solid #888;
        border-radius: 50%;
        background: #fff;
    }
    .edtools input[type="radio"]:checked {
        background: radial-gradient(#444 0 2px, #fff 3px);
    }
    .edtools .axis {
        gap: 8px;
        margin-right: 3px;
        font-size: 13px;
    }
    .edtools.coords {
        padding: 0 0 1px 3px;
    }
    .coords .sep {
        margin: 0 -4px 0 3px;
    }
    .spin {
        display: flex;
        align-items: center;
        width: 78px;
        height: 23px;
        padding-right: 4px;
        border: 1px solid #7a7a7a;
        background: #f4f4f4;
    }
    .spin input {
        flex: 1;
        min-width: 0;
        padding: 0 10px;
        border: 0;
        background: none;
        color: #777;
        font: 13px/16px var(--ui);
        text-align: right;
    }
    .spin span {
        display: flex;
        flex-direction: column;
        gap: 8px;
    }
    .up, .down {
        border: 3px solid transparent;
        border-bottom-color: #666;
        border-top: 0;
    }
    .down {
        border-top: 3px solid #666;
        border-bottom: 0;
    }
    .sketch {
        height: 468px;
        background: #000;
    }
    .strong {
        fill: #0f0;
        font: bold 13px "DejaVu Sans", sans-serif;
    }
    .plain {
        fill: #c0c0c0;
        font: 12px "Liberation Mono", monospace;
    }
    .dynamic {
        height: 28px;
        padding: 2px;
        border-bottom: 1px solid #999;
    }
    .dynamic button {
        width: 58px;
        height: 23px;
        border: 1px solid #0078d7;
        background: #deebf7;
    }
    .actions {
        display: flex;
        justify-content: flex-end;
        gap: 15px;
        height: 41px;
        padding: 8px 13px 0 0;
        border-top: 1px solid #fff;
        font-family: var(--song);
    }
    .actions button, .dlgbtns button {
        width: 72px;
        height: 23px;
        padding-bottom: 2px;
        border: 1px solid #adadad;
        background: #e1e1e1;
    }
    .actions .cadpick {
        width: 105px;
        margin-right: 8px;
    }
    .actions .caddraw {
        width: 113px;
        margin-right: 10px;
    }
    .editor footer {
        display: flex;
        gap: 2px;
        height: 21px;
        border-top: 1px solid #fff;
        font: 12px/18px var(--song);
    }
    .editor footer span {
        width: 148px;
    }
    .editor footer span:last-child {
        display: flex;
        flex: 1;
        align-items: flex-end;
        justify-content: space-between;
    }
    .editor footer span:last-child::after {
        content: "";
        width: 12px;
        height: 12px;
        background: conic-gradient(transparent 25%, #aaa 0 50%, transparent 0) 0 0 / 4px 4px;
        clip-path: polygon(100% 0, 100% 100%, 0 100%);
    }

    .dialog {
        position: absolute;
        top: 206px;
        left: 109px;
        width: 411px;
        padding-bottom: 8px;
        border: 1px solid #2a8be8;
        background: #f0f0f0;
        box-shadow: 0 2px 12px rgba(0, 0, 0, 0.4);
        font-family: var(--song);
    }
    .dialog header {
        display: flex;
        align-items: center;
        justify-content: space-between;
        height: 25px;
        margin-bottom: 14px;
        padding: 0 10px 0 3px;
        background: #fff;
    }
    .dialog header h2 {
        font-family: var(--ui);
    }
    fieldset {
        min-width: 0;
        margin: 0 13px 7px;
        padding: 2px 9px 6px 7px;
        border: 1px solid #dcdcdc;
    }
    legend {
        padding: 0 4px 0 0;
    }
    textarea {
        display: block;
        width: 100%;
        height: 41px;
        padding: 0 1px;
        border: 1px solid #7a7a7a;
        outline: 0;
        background: #fff;
        color: #000;
        font: 12px/16px var(--song);
        resize: none;
    }
    textarea::selection {
        background: #0078d7;
        color: #fff;
    }
    .dlgbtns {
        display: flex;
        justify-content: flex-end;
        gap: 15px;
        padding: 5px 14px 0;
    }

    .ime {
        position: absolute;
        top: 20px;
        left: 80px;
        display: flex;
        align-items: center;
        gap: 6px;
        width: 196px;
        height: 24px;
        border: 1px solid #9dbcd8;
        background: #fff;
        color: #1f78c8;
    }
    .ime b {
        width: 16px;
        font-size: 15px;
    }
    .ime .punct {
        margin: 0 0 0 4px;
    }
    .ime .icon:first-child {
        margin: -4px 0 0 -12px;
    }
    .ball {
        position: absolute;
        top: -29px;
        left: 1154px;
        width: 48px;
        height: 48px;
        border: 2px solid #b8bcb8;
        border-radius: 50%;
        background: #43c463;
        box-shadow: inset 0 0 0 1px #1d7a40, 0 2px 6px rgba(0, 0, 0, 0.4);
        color: #fff;
        font-weight: bold;
        line-height: 68px;
        text-align: center;
    }
    .marks {
        position: absolute;
        top: 0;
        left: 0;
        fill: none;
        stroke: #f00;
        stroke-width: 3;
        pointer-events: none;
    }

    .taskbar {
        display: flex;
        align-items: center;
        height: 40px;
        background: #000b0d;
        color: #fff;
    }
    .start {
        width: 48px;
        height: 40px;
        background: #000;
    }
    .cortana {
        display: flex;
        align-items: center;
        width: 344px;
        height: 40px;
        padding: 0 15px 0 9px;
        background: #333;
    }
    .ring {
        width: 21px;
        height: 21px;
        border: 3px solid #fff;
        border-radius: 50%;
    }
    .cortana input {
        flex: 1;
        padding: 0 6px;
        border: 0;
        background: none;
        font: 14px/20px var(--ui);
    }
    .cortana input::placeholder {
        color: #999;
    }
    .task {
        flex: none;
        width: 40px;
        height: 40px;
        border-top: 2px solid transparent;
        border-bottom: 2px solid transparent;
    }
    .task.view {
        width: 49px;
    }
    .task.first {
        width: 52px;
    }
    .task.open {
        border-bottom-color: #76b9ed;
        background-clip: padding-box;
    }
    .task.open:not(.active) {
        width: 32px;
        margin: 0 4px;
    }
    .task.active {
        background: #2e3a3e;
    }
    .taskscroll {
        display: flex;
        flex-direction: column;
        align-items: center;
        justify-content: space-between;
        width: 17px;
        height: 40px;
        margin-left: 3px;
        padding: 4px 0;
        background: #f0f0f0;
        color: #444;
    }
    .links {
        margin-left: 10px;
        flex: 1;
    }
    .cpu, time {
        line-height: 17px;
        text-align: center;
    }
    .tray {
        display: flex;
        align-items: center;
        gap: 8px;
        margin: 0 19px 0 16px;
    }
    .lang {
        margin: 0 4px 0 5px;
        font-size: 14px;
    }
    .notice {
        width: 60px;
        height: 40px;
        background: #000;
    }
    .notice text {
        fill: #fff;
        font: bold 11px var(--ui);
    }
</style>
